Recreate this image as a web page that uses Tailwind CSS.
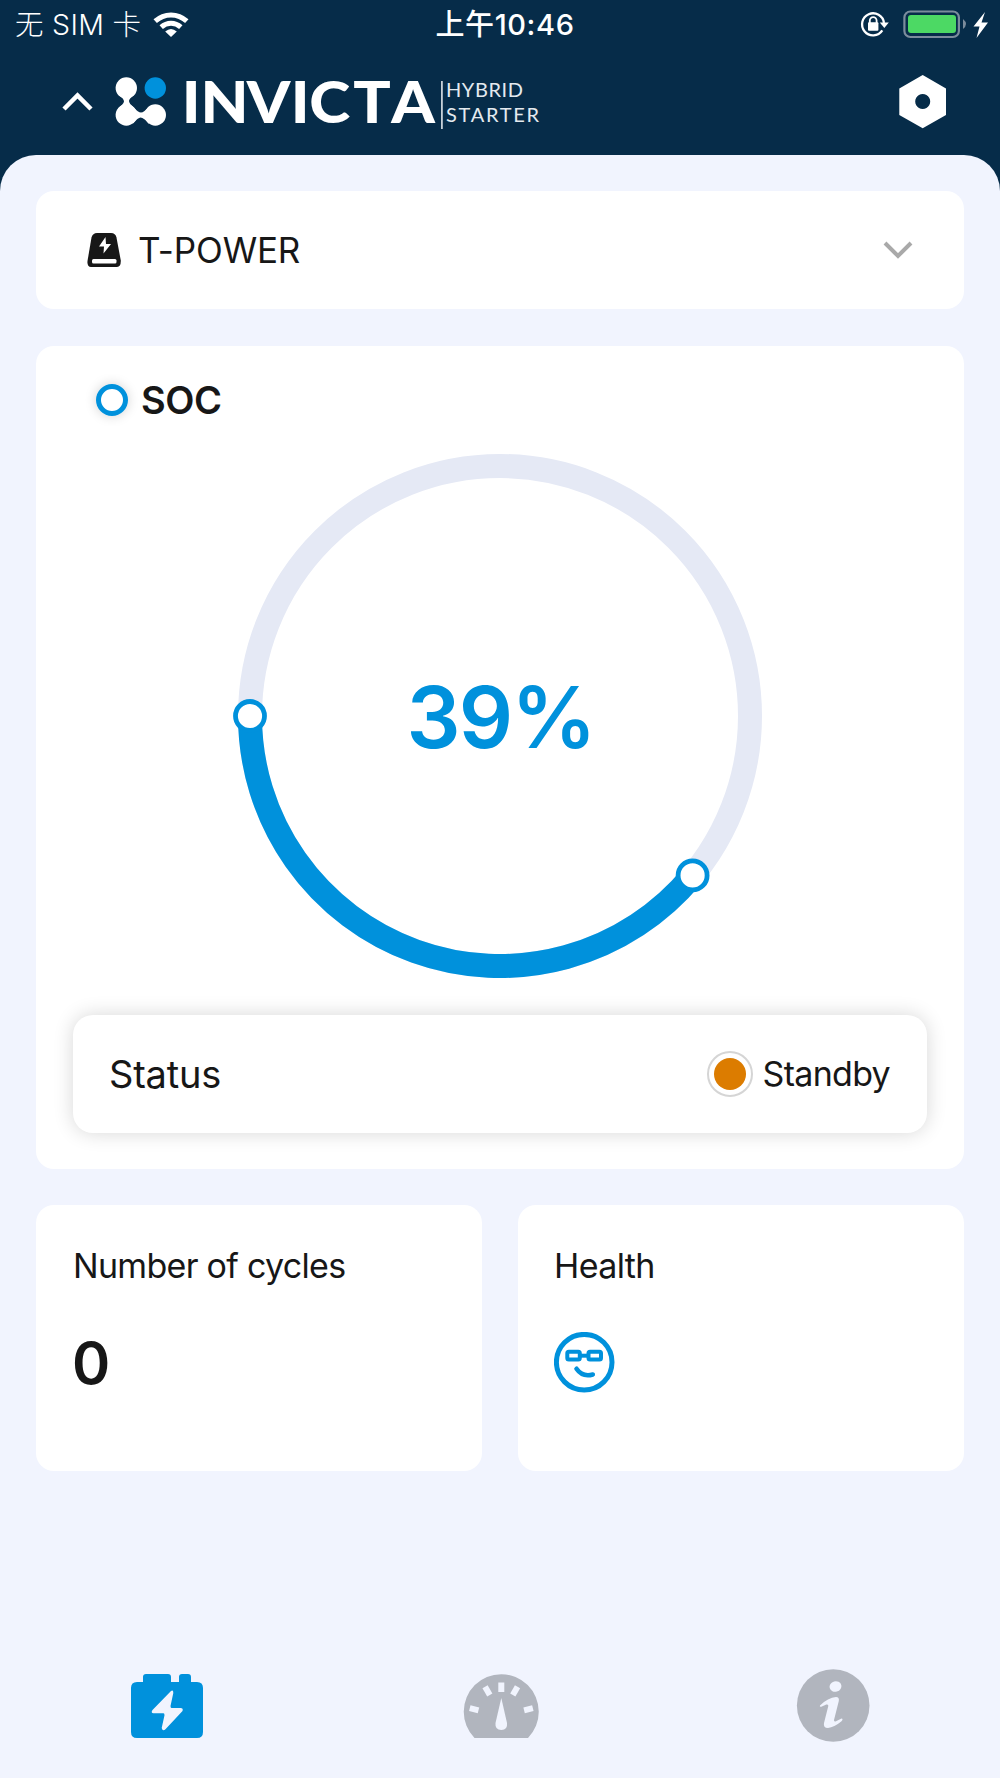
<!DOCTYPE html>
<html lang="en">
<head>
<meta charset="utf-8">
<title>Invicta Hybrid Starter</title>
<script src="https://cdn.jsdelivr.net/npm/@tailwindcss/browser@4"></script>
</head>
<body class="w-[1000px] h-[1778px] flex flex-col bg-[#062c49] overflow-hidden text-[#171717] font-['Inter','Noto_Sans_CJK_SC',sans-serif]">

  <!-- Status bar -->
  <div class="h-[50px] shrink-0 grid grid-cols-3 items-center text-white text-[28px] leading-[50px]">
    <div class="flex items-center pl-[15px] gap-[12px]">
      <span class="font-light text-[28.5px] tracking-[0.3px] whitespace-nowrap">无 SIM 卡</span>
      <svg class="w-[36px] h-[26px]" viewBox="0 0 36 26" fill="none" stroke="#fff" stroke-width="5">
        <path d="M2.2 9.2Q9 2.9 18 2.9T33.800 9.200"/>
        <path d="M8.200 15.200Q12.500 11.300 18 11.300T27.800 15.200"/>
        <path d="M12.200 19.600Q18 14.600 23.800 19.600L18 25Z" fill="#fff" stroke="none"/>
      </svg>
    </div>
    <div class="text-center font-medium text-[29px] pl-[10px] tracking-[0.6px] whitespace-nowrap">上午10:46</div>
    <div class="flex items-center justify-end">
      <svg class="w-[142px] h-[30px]" viewBox="0 0 142 30">
        <path d="M24.300 20.300A11 11 0 1 1 26 13" fill="none" stroke="#fff" stroke-width="2.300"/>
        <path d="M21.800 12.600H30.800L26.300 18Z" fill="#fff"/>
        <path d="M11.800 13v-2.500a3.400 3.400 0 0 1 6.800 0V13" fill="none" stroke="#fff" stroke-width="1.800"/>
        <rect x="10" y="12.300" width="10.400" height="8.400" rx="1" fill="#fff"/>
        <rect x="46.400" y="1.500" width="54.500" height="25.500" rx="6" fill="none" stroke="#7b8c9c" stroke-width="2.200"/>
        <rect x="50" y="5" width="48" height="18" rx="3" fill="#4cd964"/>
        <path d="M105 9q3 2.500 3 5t-3 5Z" fill="#7b8c9c"/>
        <path d="M127 2L115.500 16.500h6L118.500 28 130 12.500h-6.500Z" fill="#fff"/>
      </svg>
    </div>
  </div>

  <!-- Brand header -->
  <header class="h-[105px] shrink-0 flex items-start justify-between pl-[58px] pr-[54px]">
    <svg class="w-[490px] h-[90px]" viewBox="58 50 490 90" fill="#fff">
      <path d="M64 109L77.500 95.500 91 109" fill="none" stroke="#fff" stroke-width="4.500"/>
      <circle cx="126.300" cy="88" r="10.700"/>
      <circle cx="126.300" cy="115" r="10.700"/>
      <circle cx="155.300" cy="115" r="10.700"/>
      <circle cx="155.300" cy="88" r="10.700" fill="#0091dc"/>
      <path d="M118 94.500Q124 98.500 124 101.500Q123.500 104 118 108.500L126 120 133 123.500Q138 117.500 140.500 117.500Q144 117.500 149 124V106.500Q144 112.500 141 112.500Q138 112.500 134 107.500Q129 103.500 129 101Q129 98.500 134.500 94.500Z"/>
      <text y="123.300" x="165.200 182.300 224.400 264.300 281.200 321.200 355.600" transform="scale(1.1 1)" font-family="Lato" font-weight="900" font-size="56.500">INVICTA</text>
      <rect x="441" y="81" width="1.800" height="48" fill="#c6d0d8"/>
      <text x="446" y="96.500" font-family="Lato" font-size="20" textLength="77" fill="#e4eaef">HYBRID</text>
      <text x="446" y="121.700" font-family="Lato" font-size="20" textLength="93" fill="#e4eaef">STARTER</text>
    </svg>
    <svg class="w-[48px] h-[54px] mt-[25px]" viewBox="0 0 48 54">
      <path fill="#fff" fill-rule="evenodd" d="M24.700 0L48 13.500V40L24.700 53.200 1.300 40V13.500ZM24.700 19a7.500 7.500 0 1 0 .01 0Z"/>
    </svg>
  </header>

  <main class="grow flex flex-col bg-[#f1f4fe] rounded-t-[36px] px-[36px] pt-[36px]">
    <!-- Device selector -->
    <section class="h-[118px] shrink-0 bg-white rounded-[18px] flex items-center pl-[50px] pr-[51px]">
      <svg class="w-[36px] h-[36px]" viewBox="0 0 36 36">
        <path d="M11 1h14q4.500 0 5.500 4.500l4.300 23Q35 35 31 35H5q-4 0-3.500-6L5.500 5.500Q6.700 1 11 1Z" fill="#171717"/>
        <path d="M19.500 5L13 14.500h5L17.500 21.500 25 12h-5Z" fill="#fff"/>
        <rect x="6" y="27" width="24.500" height="4.600" rx="1.500" fill="#fff"/>
      </svg>
      <span class="ml-[16px] text-[35px] tracking-[-0.15px]">T-POWER</span>
      <svg class="w-[30px] h-[20px] ml-auto" viewBox="0 0 30 20"><path d="M2 3L15 16 28 3" fill="none" stroke="#a9a9a9" stroke-width="4"/></svg>
    </section>

    <!-- State of charge -->
    <section class="h-[823px] shrink-0 mt-[37px] bg-white rounded-[18px] flex flex-col px-[37px]">
      <div class="flex items-center h-[54px] mt-[27px] pl-[23px]">
        <span class="w-[32px] h-[32px] rounded-full border-[5px] border-[#0091dc] shadow-[0_0_12px_rgba(0,0,0,0.18)]"></span>
        <span class="ml-[13px] text-[38px] font-semibold tracking-[-0.5px]">SOC</span>
      </div>
      <svg class="w-[540px] h-[540px] mx-auto mt-[19px]" viewBox="230 446 540 540">
        <circle cx="500" cy="716" r="250" fill="none" stroke="#e5e9f5" stroke-width="24"/>
        <path d="M250 716A250 250 0 0 0 692.600 875.400" fill="none" stroke="#0091dc" stroke-width="24"/>
        <circle cx="250" cy="716" r="14.500" fill="#fff" stroke="#0091dc" stroke-width="4.800"/>
        <circle cx="692.600" cy="875.400" r="14.500" fill="#fff" stroke="#0091dc" stroke-width="4.800"/>
        <text x="501.500" y="747.500" text-anchor="middle" textLength="190" font-size="85" font-weight="600" fill="#0091dc">39%</text>
      </svg>
      <div class="h-[118px] mt-[29px] rounded-[20px] shadow-[0_0_20px_rgba(0,0,0,0.16)] flex items-center pl-[36px] pr-[37px] bg-white">
        <span class="text-[38px] tracking-[-0.2px]">Status</span>
        <span class="ml-auto w-[46px] h-[46px] rounded-full border-2 border-[#d5d5d5] flex items-center justify-center"><span class="w-[32px] h-[32px] rounded-full bg-[#dc7c00]"></span></span>
        <span class="ml-[10px] -mt-[2px] text-[34px] tracking-[-0.7px]">Standby</span>
      </div>
    </section>

    <!-- Metrics -->
    <div class="h-[266px] shrink-0 mt-[36px] grid grid-cols-2 gap-[36px]">
      <section class="bg-white rounded-[18px] px-[37px] pt-[36px] flex flex-col">
        <h2 class="text-[34px] leading-[50px] tracking-[-0.7px]">Number of cycles</h2>
        <p class="text-[58px] leading-[70px] mt-[37px] -ml-[1px] font-semibold">0</p>
      </section>
      <section class="bg-white rounded-[18px] px-[36px] pt-[36px] flex flex-col">
        <h2 class="text-[34px] leading-[50px] tracking-[-0.6px]">Health</h2>
        <svg class="w-[62px] h-[62px] mt-[41px]" viewBox="0 0 62 62" fill="none" stroke="#0091dc">
          <circle cx="30.200" cy="30.200" r="27.800" stroke-width="5"/>
          <rect x="13.300" y="19.800" width="12.500" height="7.800" rx="1.500" stroke-width="4"/>
          <rect x="34.500" y="19.800" width="12.500" height="7.800" rx="1.500" stroke-width="4"/>
          <path d="M27 23.700h8" stroke-width="4"/>
          <path d="M22.500 36.800Q28.500 45.500 38.800 42.500" stroke-width="4.600" stroke-linecap="round"/>
        </svg>
      </section>
    </div>

    <!-- Tab bar -->
    <nav class="mt-auto mb-[34px] h-[75px] flex items-start justify-between px-[94px]">
      <svg class="w-[74px] h-[75px]" viewBox="0 0 74 75">
        <path d="M7 13h6V8q0-3 3-3h22q3 0 3 3v5h8V8q0-3 3-3h6q3 0 3 3v5h6q6 0 6 6v44q0 6-6 6H7q-6 0-6-6V19q0-6 6-6Z" fill="#0091dc"/>
        <path d="M41 22L22.500 41q-2 3 1 3.200h10q1 0 1 2L31.700 59q1 4 4 1L52.500 42q1-3-2-3h-9q-1 0-1-2l2.800-13q0-3.500-2.300-2Z" fill="#f1f4fe"/>
      </svg>
      <svg class="w-[76px] h-[75px] ml-[2px]" viewBox="0 0 76 75">
        <path d="M11.500 69A37.500 37.500 0 1 1 65 69Z" fill="#b1b5be"/>
        <g fill="#f1f4fe">
          <rect x="35.300" y="13.500" width="6" height="9.500"/>
          <rect x="35.300" y="13.500" width="6" height="9.500" transform="rotate(-30 38.300 46)"/>
          <rect x="35.300" y="13.500" width="6" height="9.500" transform="rotate(30 38.300 46)"/>
          <rect x="35.300" y="14.500" width="6" height="9" transform="rotate(-76 38.300 47)"/>
          <rect x="35.300" y="14.500" width="6" height="9" transform="rotate(76 38.300 47)"/>
          <path d="M38.300 29L44 54q.8 7-5.700 7t-5.800-7Z"/>
        </g>
      </svg>
      <svg class="w-[74px] h-[75px]" viewBox="0 0 74 75">
        <circle cx="37.200" cy="36.500" r="36.300" fill="#b1b5be"/>
        <g fill="#f1f4fe">
          <ellipse cx="39.500" cy="17.500" rx="6" ry="5.300" transform="rotate(-15 39.500 17.500)"/>
          <path d="M24 36.500Q32 28.500 40 28q3.500 0 2.800 4L38 51q-.3 2 2 1.300l5.500-2.800q2 .5 0 2.800Q38 58.500 32 59q-5 0-4-5l4.300-17q.3-2-2-1.500l-5 2.200q-2 .5-1.300-1.200Z"/>
        </g>
      </svg>
    </nav>
  </main>
</body>
</html>
